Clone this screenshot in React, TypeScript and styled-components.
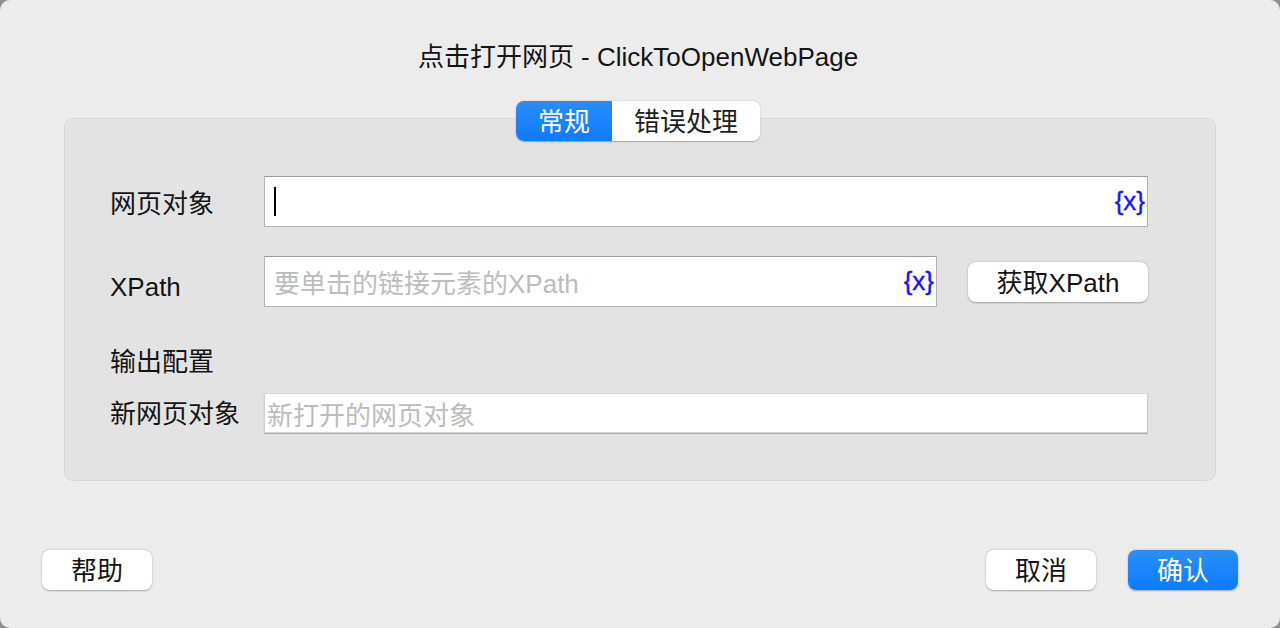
import React from "react";
import styled, { createGlobalStyle } from "styled-components";

const GlobalStyle = createGlobalStyle`
  html, body {
    margin: 0;
    padding: 0;
    background: #8f8f8f;
  }
  * { box-sizing: border-box; }
`;

const FONT = `"Liberation Sans", "Noto Sans CJK SC", sans-serif`;

const Window = styled.div`
  width: 1280px;
  height: 628px;
  background: #ececec;
  border-radius: 10px;
  display: flex;
  flex-direction: column;
  align-items: stretch;
  padding-top: 42px;
  font-family: ${FONT};
  color: #1d1d1d;
  overflow: hidden;
`;

const Title = styled.div`
  font-size: 26px;
  line-height: 30px;
  height: 30px;
  text-align: center;
  color: #141414;
  padding-right: 4px;
`;

const TabBar = styled.div`
  position: relative;
  z-index: 1;
  align-self: center;
  margin: 29px 4px 0 0;
  display: flex;
  height: 40px;
  border-radius: 8px;
  background: #ffffff;
  box-shadow: 0 0.5px 1.5px rgba(0, 0, 0, 0.28);
  overflow: hidden;
`;

const Tab = styled.div<{ $active?: boolean; $w: number }>`
  width: ${(p) => p.$w}px;
  height: 40px;
  display: flex;
  align-items: center;
  justify-content: center;
  padding-bottom: 3px;
  font-size: 26px;
  color: ${(p) => (p.$active ? "#ffffff" : "#1d1d1d")};
  background: ${(p) =>
    p.$active ? "linear-gradient(#2b8cf8, #0d7bff)" : "#ffffff"};
`;

const Group = styled.div`
  margin: -23px 64px 0 64px;
  height: 363px;
  background: #e3e3e3;
  border: 1px solid #d7d7d7;
  border-radius: 9px;
  padding: 57px 67px 0 45px;
  display: flex;
  flex-direction: column;
`;

const Row = styled.div<{ $mt?: number; $h: number }>`
  display: flex;
  align-items: center;
  height: ${(p) => p.$h}px;
  margin-top: ${(p) => p.$mt ?? 0}px;
`;

const Label = styled.div<{ $dy?: number }>`
  width: 154px;
  flex: none;
  font-size: 26px;
  line-height: 30px;
  color: #141414;
  padding-top: ${(p) => (p.$dy ?? 0) * 2}px;
`;

const SectionLabel = styled.div`
  margin-top: 40px;
  font-size: 26px;
  line-height: 30px;
  height: 30px;
  color: #141414;
`;

const Field = styled.div<{ $light?: boolean; $h: number }>`
  flex: 1;
  height: ${(p) => p.$h}px;
  background: #ffffff;
  border: 1px solid ${(p) => (p.$light ? "#d0d0d0" : "#b2b2b2")};
  border-top-color: ${(p) => (p.$light ? "#d6d6d6" : "#9e9e9e")};
  box-shadow: ${(p) => (p.$light ? "0 1px 1px rgba(0,0,0,0.22)" : "none")};
  display: flex;
  align-items: center;
  padding: 0 2px 0 9px;
`;

const Caret = styled.span`
  width: 2px;
  height: 29px;
  background: #000;
  display: block;
`;

const Placeholder = styled.span<{ $pl?: number }>`
  flex: 1;
  font-size: 26px;
  color: #bcbcbc;
  margin-left: ${(p) => p.$pl ?? 0}px;
  white-space: nowrap;
`;

const VarToken = styled.span`
  margin-left: auto;
  font-family: "Liberation Sans", sans-serif;
  font-size: 26px;
  color: #1414ff;
  -webkit-text-stroke: 0.4px #1414ff;
`;

const Button = styled.button<{ $primary?: boolean; $w: number }>`
  width: ${(p) => p.$w}px;
  height: 40px;
  border: none;
  border-radius: 8px;
  font-family: ${FONT};
  font-size: 26px;
  padding: 0 0 3px 0;
  color: ${(p) => (p.$primary ? "#ffffff" : "#141414")};
  background: ${(p) =>
    p.$primary ? "linear-gradient(#2a8ff8, #0b7bff)" : "#ffffff"};
  box-shadow: 0 0.5px 2px rgba(0, 0, 0, 0.3);
  flex: none;
`;

const SideButton = styled(Button)`
  margin-left: 31px;
`;

const Footer = styled.div`
  margin-top: auto;
  padding: 0 42px 38px 42px;
  display: flex;
  align-items: center;
  gap: 32px;
`;

const Spacer = styled.div`
  flex: 1;
`;

export default function App() {
  return (
    <>
      <GlobalStyle />
      <Window>
        <Title>点击打开网页 - ClickToOpenWebPage</Title>
        <TabBar>
          <Tab $active $w={96}>常规</Tab>
          <Tab $w={148}>错误处理</Tab>
        </TabBar>
        <Group>
          <Row $h={51}>
            <Label $dy={2}>网页对象</Label>
            <Field $h={51}>
              <Caret />
              <VarToken>{"{x}"}</VarToken>
            </Field>
          </Row>
          <Row $h={51} $mt={29}>
            <Label $dy={5}>XPath</Label>
            <Field $h={51}>
              <Placeholder>要单击的链接元素的XPath</Placeholder>
              <VarToken>{"{x}"}</VarToken>
            </Field>
            <SideButton $w={180}>获取XPath</SideButton>
          </Row>
          <SectionLabel>输出配置</SectionLabel>
          <Row $h={40} $mt={16}>
            <Label $dy={1}>新网页对象</Label>
            <Field $h={40} $light>
              <Placeholder $pl={-7}>新打开的网页对象</Placeholder>
            </Field>
          </Row>
        </Group>
        <Footer>
          <Button $w={110}>帮助</Button>
          <Spacer />
          <Button $w={110}>取消</Button>
          <Button $w={110} $primary>确认</Button>
        </Footer>
      </Window>
    </>
  );
}
